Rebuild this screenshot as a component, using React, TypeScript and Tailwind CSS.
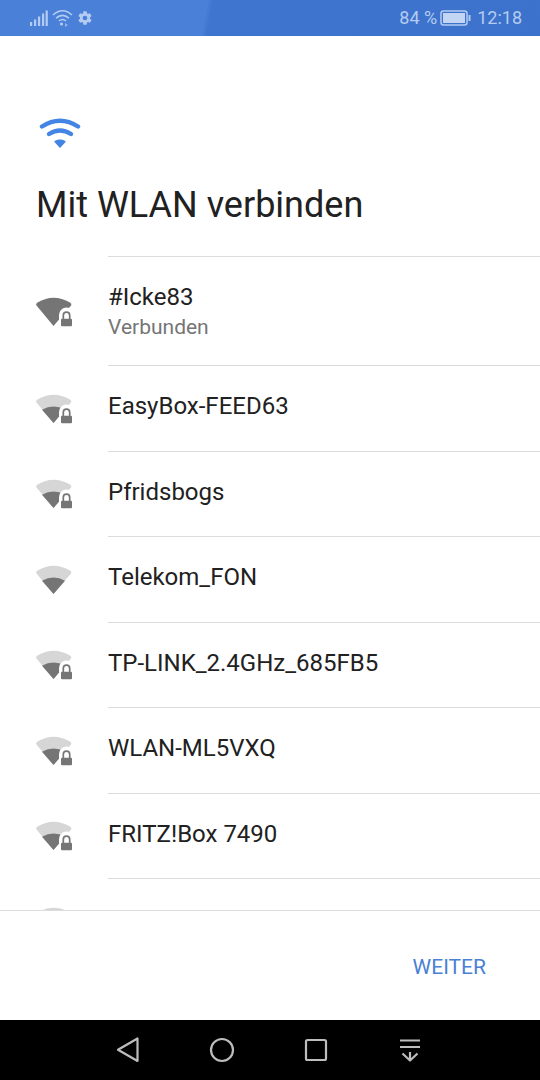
import React from "react";

const rows = [
  { name: "EasyBox-FEED63", lock: true },
  { name: "Pfridsbogs", lock: true },
  { name: "Telekom_FON", lock: false },
  { name: "TP-LINK_2.4GHz_685FB5", lock: true },
  { name: "WLAN-ML5VXQ", lock: true },
  { name: "FRITZ!Box 7490", lock: true },
];

function Lock({ x = 0, y = 0 }: { x?: number; y?: number }) {
  return (
    <g transform={`translate(${x} ${y})`}>
      <path d="M-7.5 -1 a7.5 7.5 0 0 1 15 0 v14 h-15z" fill="#fff" />
      <rect x="-5.5" y="2.8" width="11" height="7.4" rx="1" fill="#757575" />
      <path d="M-3.2 3 v-3.6 a3.2 3.2 0 0 1 6.4 0 V3" fill="none" stroke="#757575" strokeWidth="1.7" />
    </g>
  );
}

function WifiSignal({ full, lock }: { full?: boolean; lock: boolean }) {
  const outer = "M18.5 31 L1.5 10.5 Q0.5 8.8 2.5 7.5 Q18.5 -2 35 7.5 Q37 8.8 36 10.5 Z";
  const inner = "M18.5 31 L7 17.8 Q18.5 11.4 30 17.8 Z";
  return (
    <svg width="40" height="32" viewBox="0 0 40 32" className="block">
      <path d={outer} fill={full ? "#757575" : "#d6d6d6"} />
      {!full && <path d={inner} fill="#757575" />}
      {lock && <Lock x={31.5} y={21} />}
    </svg>
  );
}

function Row({ name, lock, sub, full, clipped }: { name: string; lock: boolean; sub?: string; full?: boolean; clipped?: boolean }) {
  const pad = sub ? "pt-[2px]" : clipped ? "pb-[2px]" : "pb-[4px]";
  return (
    <div className={`flex items-center ${sub ? "h-[109px]" : "h-[85.5px]"}`}>
      <div className="w-[108px] shrink-0 pl-[35px] flex items-center">
        <WifiSignal full={full} lock={lock} />
      </div>
      <div className={`flex-1 self-stretch flex flex-col justify-center border-t border-[#dcdcdc] ${pad}`}>
        <div className="text-[24px] leading-[30px] text-[#212121]">{name}</div>
        {sub && <div className="text-[21px] leading-[30px] text-[#757575]">{sub}</div>}
      </div>
    </div>
  );
}

export default function App() {
  return (
    <div className="w-[540px] h-[1080px] flex flex-col bg-white overflow-hidden font-['Roboto',sans-serif]">
      <div className="h-[36px] shrink-0 flex items-center pl-[29px] pr-[18px] bg-[linear-gradient(100deg,#4a80d8_0%,#4b80d9_38%,#3f75cf_39%,#3c72cc_100%)] text-[#b4ccf1]">
        <svg width="19" height="16" viewBox="0 0 19 16" fill="currentColor" className="mr-[4px]">
          <rect x="1" y="12" width="2.2" height="4" />
          <rect x="5" y="9.5" width="2.2" height="6.5" />
          <rect x="9" y="6.5" width="2.2" height="9.5" />
          <rect x="13" y="3.5" width="2.2" height="12.5" />
          <rect x="16.6" y="0.5" width="2.2" height="15.5" />
        </svg>
        <svg width="21" height="18" viewBox="0 0 21 18" fill="none" stroke="currentColor" strokeWidth="1.6" className="mr-[4px]">
          <path d="M1 6 Q10.5 -2.5 20 6" />
          <path d="M4 9.2 Q10.5 3.5 17 9.2" />
          <path d="M7 12 Q10.5 9 14 12" />
          <circle cx="9.5" cy="15" r="1.6" fill="currentColor" stroke="none" />
          <path d="M13 14 l3 2 -3 2z" fill="currentColor" stroke="none" opacity="0.7" />
        </svg>
        <svg width="16" height="16" viewBox="0 0 24 24" fill="currentColor">
          <path d="M19.4 13c.04-.33.07-.66.07-1s-.03-.67-.07-1l2.1-1.65c.2-.15.25-.42.12-.64l-2-3.46c-.12-.22-.39-.3-.61-.22l-2.49 1c-.52-.4-1.08-.73-1.69-.98l-.38-2.65A.49.49 0 0 0 14 2h-4c-.25 0-.46.18-.49.42l-.38 2.65c-.61.25-1.17.59-1.69.98l-2.49-1c-.23-.09-.49 0-.61.22l-2 3.46c-.13.22-.07.49.12.64L4.57 11c-.04.33-.07.67-.07 1s.03.67.07 1l-2.11 1.65c-.19.15-.25.42-.12.64l2 3.46c.12.22.39.3.61.22l2.49-1c.52.4 1.08.73 1.69.98l.38 2.65c.03.24.24.42.49.42h4c.25 0 .46-.18.49-.42l.38-2.65c.61-.25 1.17-.59 1.69-.98l2.49 1c.23.09.49 0 .61-.22l2-3.46c.12-.22.07-.49-.12-.64L19.4 13zM12 15.5a3.5 3.5 0 1 1 0-7 3.5 3.5 0 0 1 0 7z" />
        </svg>
        <div className="flex-1" />
        <span className="text-[18px] leading-none mr-[3px]">84 %</span>
        <svg width="31" height="16" viewBox="0 0 31 16" className="mr-[6px]">
          <rect x="1" y="1" width="26" height="14" rx="2.5" fill="none" stroke="currentColor" strokeWidth="1.5" />
          <rect x="3" y="3" width="22" height="10" fill="#c3d5f3" />
          <rect x="28.5" y="5" width="2" height="6" fill="currentColor" />
        </svg>
        <span className="text-[18px] leading-none">12:18</span>
      </div>

      <div className="h-[220px] shrink-0 flex flex-col pl-[36px]">
        <svg width="44" height="34" viewBox="0 0 44 34" fill="none" stroke="#4285e4" strokeWidth="4.4" strokeLinecap="round" className="mt-[80px] ml-[2px]">
          <path d="M4 10.5 Q22 -1 40 10.5" />
          <path d="M11 18 Q22 11 33 18" />
          <path d="M22 31 L17 25.6 Q22 23 27 25.6 Z" fill="#4285e4" stroke="#4285e4" strokeWidth="1.4" strokeLinecap="butt" strokeLinejoin="round" />
        </svg>
        <h1 className="mt-[33px] text-[36px] leading-[44px] font-normal text-[#212121]">Mit WLAN verbinden</h1>
      </div>

      <div className="h-[655px] shrink-0 overflow-hidden">
        <Row name="#Icke83" sub="Verbunden" lock full />
        {rows.map((r) => (
          <Row key={r.name} name={r.name} lock={r.lock} />
        ))}
        <Row name="lancerl" lock={false} clipped />
      </div>

      <div className="flex-1 -mt-[1px] pt-[5px] flex items-center justify-end border-t border-[#dcdcdc] pr-[54px]">
        <span className="text-[21px] text-[#4a80d4]">WEITER</span>
      </div>

      <div className="h-[60px] shrink-0 bg-black flex items-center text-[#bdbdbd]">
        <svg width="540" height="60" viewBox="0 0 540 60" fill="none" stroke="currentColor" strokeWidth="2.2" strokeLinejoin="round">
          <path d="M137.5 18.5 V41 L118 29.8 Z" />
          <circle cx="222" cy="30" r="11" />
          <rect x="306" y="20" width="20" height="20" rx="1.5" />
          <path d="M400 20.5 H420 M400 27 H420 M410 32 V40.5 M402.5 33.5 L410 40.5 L417.5 33.5" />
        </svg>
      </div>
    </div>
  );
}
